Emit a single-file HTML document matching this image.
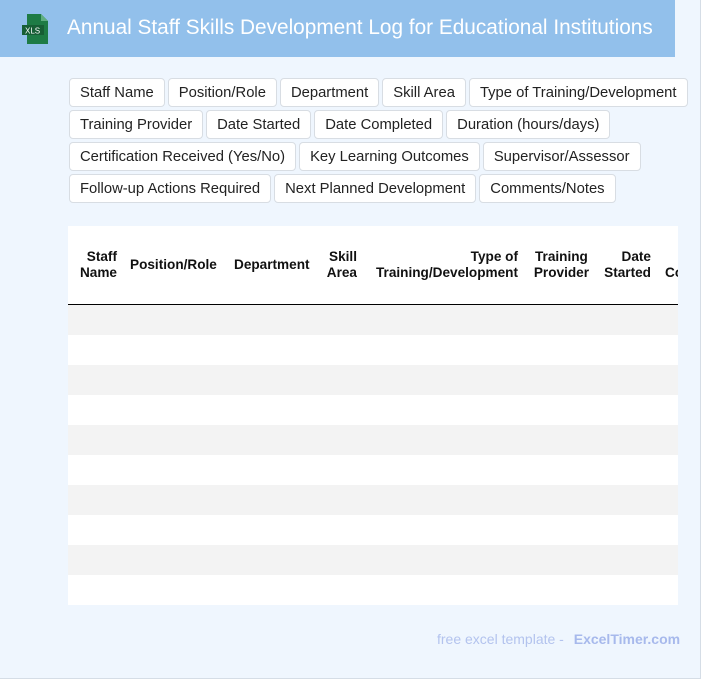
<!DOCTYPE html>
<html><head><style>
*{margin:0;padding:0;box-sizing:border-box}
body{width:702px;height:680px;background:#fff;font-family:"Liberation Sans",sans-serif;position:relative;overflow:hidden}
.page{position:absolute;left:0;top:0;width:701px;height:679px;background:#eff6fe;border-right:1px solid #d5dde6;border-bottom:1px solid #d5dde6}
.hdr{position:absolute;left:0;top:0;width:675px;height:57px;background:#92c0eb}
.hdr h1{position:absolute;left:67px;top:16px;font-size:20.8px;font-weight:normal;color:#fff;white-space:nowrap}
.chips{position:absolute;left:69px;top:78px;width:630px}
.r{display:flex;gap:3px;height:29px;margin-bottom:3px}
.chip{height:29px;background:#fff;border:1px solid #d8dde3;border-radius:4px;font-size:14.8px;color:#222;line-height:28px;padding:0 10px;white-space:nowrap}
.tbl{position:absolute;left:68px;top:226px;width:610px;height:379px;background:#fff;overflow:hidden}
.th{position:absolute;font-weight:bold;font-size:13.6px;color:#111;text-align:right;line-height:16px;white-space:nowrap}
.line{position:absolute;left:0;top:78px;width:610px;height:1px;background:#000}
.row{position:absolute;left:0;width:610px;height:30px}
.foot{position:absolute;left:437px;top:631px;font-size:14px;color:#b3c3ee;white-space:nowrap}
.foot b{color:#a7b9ec;margin-left:6px}
</style></head><body>
<div class="page">
<div class="hdr">
<svg style="position:absolute;left:22px;top:14px" width="28" height="30" viewBox="0 0 28 30"><path d="M5 0h14l7 7v23H5z" fill="#1e7b45"/><path d="M19 0v7h7z" fill="#5fae80"/><rect x="0" y="11" width="22" height="10" fill="#175e35"/><text x="3" y="19.5" font-size="8" fill="#fff" font-family="Liberation Sans">XLS</text></svg>
<h1>Annual Staff Skills Development Log for Educational Institutions</h1>
</div>
<div class="chips">
<div class="r"><div class="chip">Staff Name</div><div class="chip">Position/Role</div><div class="chip">Department</div><div class="chip">Skill Area</div><div class="chip">Type of Training/Development</div></div>
<div class="r"><div class="chip">Training Provider</div><div class="chip">Date Started</div><div class="chip">Date Completed</div><div class="chip">Duration (hours/days)</div></div>
<div class="r"><div class="chip">Certification Received (Yes/No)</div><div class="chip">Key Learning Outcomes</div><div class="chip">Supervisor/Assessor</div></div>
<div class="r"><div class="chip">Follow-up Actions Required</div><div class="chip">Next Planned Development</div><div class="chip">Comments/Notes</div></div>
</div>
<div class="tbl">
<div class="th" style="right:561px;top:23px">Staff<br>Name</div>
<div class="th" style="left:62px;top:31px">Position/Role</div>
<div class="th" style="left:166px;top:31px">Department</div>
<div class="th" style="right:321px;top:23px">Skill<br>Area</div>
<div class="th" style="right:160px;top:23px">Type of<br>Training/Development</div>
<div class="th" style="right:89px;top:23px;text-align:center">Training<br>Provider</div>
<div class="th" style="right:27px;top:23px">Date<br>Started</div>
<div class="th" style="left:597px;top:39px">Co</div>
<div class="line"></div>
<div class="row" style="top:79px;background:#f3f3f3"></div>
<div class="row" style="top:139px;background:#f3f3f3"></div>
<div class="row" style="top:199px;background:#f3f3f3"></div>
<div class="row" style="top:259px;background:#f3f3f3"></div>
<div class="row" style="top:319px;background:#f3f3f3"></div>
</div>
<div class="foot">free excel template - <b>ExcelTimer.com</b></div>
</div>
</body></html>
